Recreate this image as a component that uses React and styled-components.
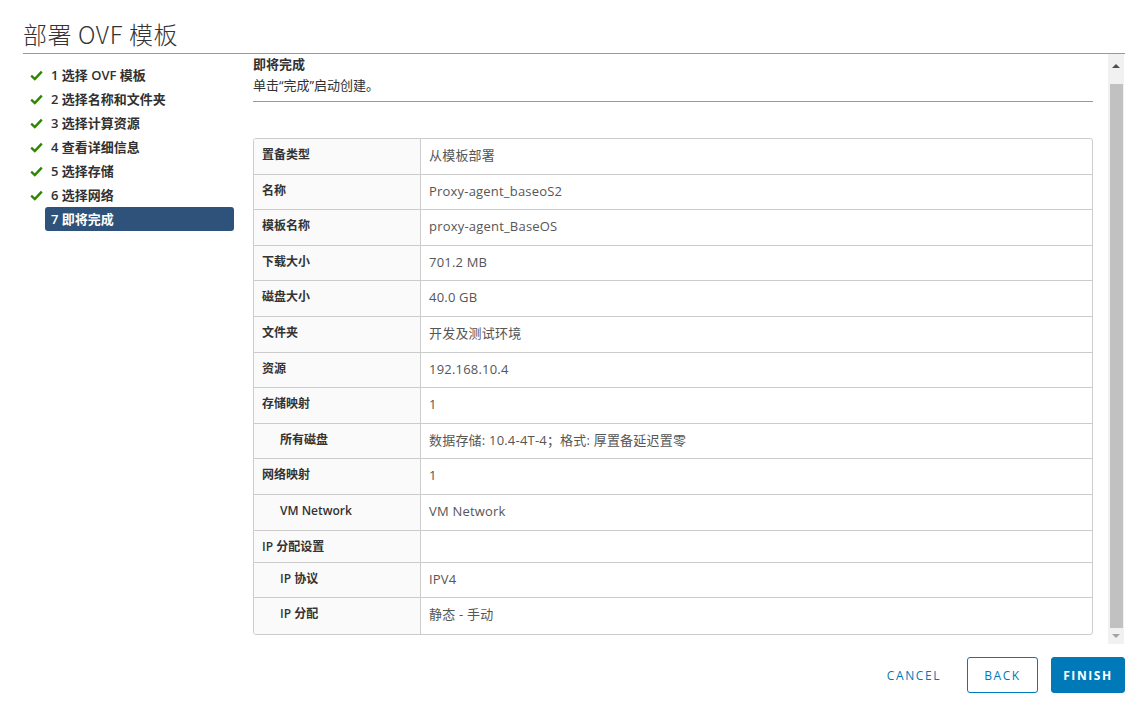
import React from 'react';
import styled, { createGlobalStyle } from 'styled-components';

const GlobalStyle = createGlobalStyle`
  html, body {
    margin: 0;
    padding: 0;
    background: #fff;
  }
  body {
    font-family: "Open Sans", "Noto Sans CJK SC", sans-serif;
    color: #333;
  }
`;

const steps = [
  { label: '1 选择 OVF 模板', done: true },
  { label: '2 选择名称和文件夹', done: true },
  { label: '3 选择计算资源', done: true },
  { label: '4 查看详细信息', done: true },
  { label: '5 选择存储', done: true },
  { label: '6 选择网络', done: true },
  { label: '7 即将完成', active: true },
];

const rows = [
  { label: '置备类型', value: '从模板部署' },
  { label: '名称', value: 'Proxy-agent_baseoS2' },
  { label: '模板名称', value: 'proxy-agent_BaseOS' },
  { label: '下载大小', value: '701.2 MB' },
  { label: '磁盘大小', value: '40.0 GB' },
  { label: '文件夹', value: '开发及测试环境' },
  { label: '资源', value: '192.168.10.4' },
  { label: '存储映射', value: '1' },
  { label: '所有磁盘', value: '数据存储: 10.4-4T-4；格式: 厚置备延迟置零', indent: true },
  { label: '网络映射', value: '1' },
  { label: 'VM Network', value: 'VM Network', indent: true },
  { label: 'IP 分配设置', value: '', short: true },
  { label: 'IP 协议', value: 'IPV4', indent: true },
  { label: 'IP 分配', value: '静态 - 手动', indent: true },
];

function Check() {
  return (
    <svg width="13" height="11" viewBox="0 0 13 11">
      <path d="M1.2 5.6 L4.8 9 L11.8 1.6" fill="none" stroke="#2f8400" strokeWidth="2.4" />
    </svg>
  );
}

export default function App() {
  return (
    <Wizard>
      <GlobalStyle />
      <Header>
        <Title>部署 OVF 模板</Title>
      </Header>
      <Body>
        <Sidebar>
          {steps.map((s) => (
            <Step key={s.label}>
              <CheckCol>{s.done && <Check />}</CheckCol>
              <StepLabel active={s.active}>{s.label}</StepLabel>
            </Step>
          ))}
        </Sidebar>
        <Content>
          <Heading>即将完成</Heading>
          <Sub>单击“完成”启动创建。</Sub>
          <Divider />
          <Table>
            {rows.map((r) => (
              <Row key={r.label} short={r.short}>
                <Label indent={r.indent}>{r.label}</Label>
                <Value>{r.value}</Value>
              </Row>
            ))}
          </Table>
        </Content>
        <Scrollbar>
          <Arrow up />
          <Thumb />
          <Arrow />
        </Scrollbar>
      </Body>
      <Footer>
        <Button variant="flat" width={80}>CANCEL</Button>
        <Button variant="outline" width={71}>BACK</Button>
        <Button variant="primary" width={74}>FINISH</Button>
      </Footer>
    </Wizard>
  );
}

const Wizard = styled.div`
  width: 1144px;
  height: 707px;
  box-sizing: border-box;
  padding: 0 19px 0 23px;
  display: flex;
  flex-direction: column;
  overflow: hidden;
`;

const Header = styled.div`
  height: 54px;
  box-sizing: border-box;
  padding-top: 17px;
  border-bottom: 1px solid #9a9a9a;
`;

const Title = styled.h1`
  margin: 0;
  font-family: "Noto Sans CJK SC", sans-serif;
  font-size: 24px;
  line-height: 34px;
  font-weight: 300;
  color: #333;
  letter-spacing: 0.6px;
`;

const Body = styled.div`
  display: flex;
  height: 590px;
`;

const Sidebar = styled.div`
  width: 211px;
  margin-right: 19px;
  padding-top: 9px;
  display: flex;
  flex-direction: column;
`;

const Step = styled.div`
  display: flex;
  align-items: center;
  height: 24px;
`;

const CheckCol = styled.div`
  width: 22px;
  padding-left: 7px;
  box-sizing: border-box;
  display: flex;
  align-items: center;
  padding-top: 1px;
`;

const StepLabel = styled.div`
  flex: 1;
  height: 24px;
  line-height: 24px;
  padding-left: 6px;
  border-radius: 3px;
  font-size: 13px;
  font-weight: 600;
  color: ${(p) => (p.active ? '#fff' : '#313131')};
  background: ${(p) => (p.active ? '#2e5279' : 'transparent')};
`;

const Content = styled.div`
  flex: 1;
  padding-right: 15px;
  display: flex;
  flex-direction: column;
`;

const Heading = styled.div`
  font-size: 13px;
  font-weight: 700;
  line-height: 20px;
  color: #313131;
`;

const Sub = styled.div`
  font-size: 13px;
  line-height: 23px;
  color: #313131;
`;

const Divider = styled.div`
  border-top: 1px solid #9a9a9a;
  margin-top: 4px;
  margin-bottom: 36px;
`;

const Table = styled.div`
  border: 1px solid #ccc;
  border-radius: 3px;
  display: flex;
  flex-direction: column;
  overflow: hidden;
`;

const Row = styled.div`
  display: flex;
  height: ${(p) => (p.short ? '32px' : '35.6px')};
  box-sizing: border-box;
  border-bottom: 1px solid #ccc;
  &:last-child {
    border-bottom: none;
  }
`;

const Label = styled.div`
  width: 167px;
  flex-shrink: 0;
  background: #fafafa;
  border-right: 1px solid #ccc;
  padding-left: ${(p) => (p.indent ? '26px' : '8px')};
  padding-top: 9px;
  box-sizing: border-box;
  font-size: 12px;
  font-weight: 600;
  line-height: 14px;
  color: #333;
`;

const Value = styled.div`
  flex: 1;
  padding-left: 8px;
  padding-top: 8px;
  font-size: 13px;
  line-height: 17px;
  color: #565656;
  letter-spacing: 0.2px;
`;

const Scrollbar = styled.div`
  width: 16px;
  margin-right: 1px;
  background: #f1f1f1;
  display: flex;
  flex-direction: column;
  align-items: center;
`;

const Arrow = styled.div`
  height: ${(p) => (p.up ? '30px' : '16px')};
  width: 100%;
  position: relative;
  flex-shrink: 0;
  &::after {
    content: '';
    position: absolute;
    left: 4px;
    top: ${(p) => (p.up ? '10px' : '6px')};
    border-left: 4px solid transparent;
    border-right: 4px solid transparent;
    ${(p) =>
      p.up ? 'border-bottom: 4px solid #505050;' : 'border-top: 4px solid #a3a3a3;'}
  }
`;

const Thumb = styled.div`
  flex: 1;
  width: 13px;
  background: #c1c1c1;
`;

const Footer = styled.div`
  flex: 1;
  display: flex;
  justify-content: flex-end;
  align-items: flex-start;
  padding-top: 13px;
  gap: 13px;
`;

const Button = styled.button`
  width: ${(p) => p.width}px;
  height: 36px;
  box-sizing: border-box;
  padding: 0;
  text-align: center;
  border-radius: 3px;
  font-family: "Open Sans", sans-serif;
  font-size: 12px;
  letter-spacing: 1.6px;
  cursor: pointer;
  border: 1px solid ${(p) => (p.variant === 'flat' ? 'transparent' : '#0079b8')};
  background: ${(p) => (p.variant === 'primary' ? '#0079b8' : 'transparent')};
  color: ${(p) => (p.variant === 'primary' ? '#fff' : '#0079b8')};
  font-weight: ${(p) => (p.variant === 'primary' ? 700 : 500)};
`;
